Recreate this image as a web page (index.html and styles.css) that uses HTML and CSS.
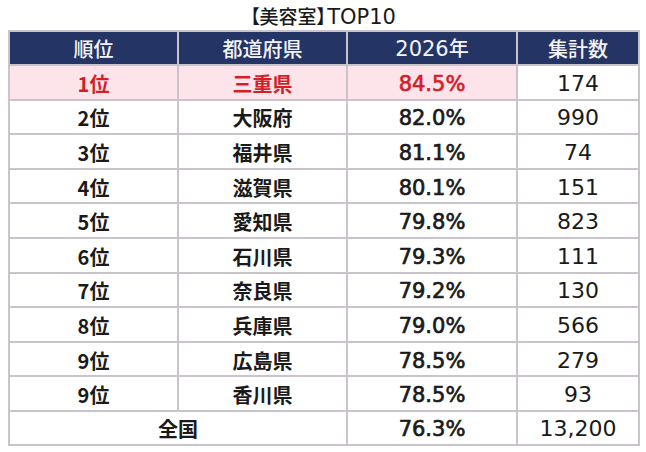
FILE: index.html
```html
<!DOCTYPE html>
<html lang="ja">
<head>
<meta charset="utf-8">
<link rel="stylesheet" href="styles.css">
</head>
<body>
<div class="title"><span class="br">【美容室】</span><span class="lat">TOP10</span></div>
<table class="rank">
  <colgroup>
    <col class="c1"><col class="c2"><col class="c3"><col class="c4">
  </colgroup>
  <thead>
    <tr><th>順位</th><th>都道府県</th><th><span class="num">2026</span>年</th><th>集計数</th></tr>
  </thead>
  <tbody>
    <tr class="top"><td class="jp hl">1位</td><td class="jp hl">三重県</td><td class="pct hl">84.5%</td><td class="cnt">174</td></tr>
    <tr><td class="jp">2位</td><td class="jp">大阪府</td><td class="pct">82.0%</td><td class="cnt">990</td></tr>
    <tr><td class="jp">3位</td><td class="jp">福井県</td><td class="pct">81.1%</td><td class="cnt">74</td></tr>
    <tr><td class="jp">4位</td><td class="jp">滋賀県</td><td class="pct">80.1%</td><td class="cnt">151</td></tr>
    <tr><td class="jp">5位</td><td class="jp">愛知県</td><td class="pct">79.8%</td><td class="cnt">823</td></tr>
    <tr><td class="jp">6位</td><td class="jp">石川県</td><td class="pct">79.3%</td><td class="cnt">111</td></tr>
    <tr><td class="jp">7位</td><td class="jp">奈良県</td><td class="pct">79.2%</td><td class="cnt">130</td></tr>
    <tr><td class="jp">8位</td><td class="jp">兵庫県</td><td class="pct">79.0%</td><td class="cnt">566</td></tr>
    <tr><td class="jp">9位</td><td class="jp">広島県</td><td class="pct">78.5%</td><td class="cnt">279</td></tr>
    <tr><td class="jp">9位</td><td class="jp">香川県</td><td class="pct">78.5%</td><td class="cnt">93</td></tr>
    <tr class="total"><td class="jp" colspan="2">全国</td><td class="pct">76.3%</td><td class="cnt">13,200</td></tr>
  </tbody>
</table>
</body>
</html>
```
FILE: styles.css
```css
html, body {
  margin: 0;
  padding: 0;
  background: #ffffff;
}
body {
  font-family: "Noto Sans CJK JP", sans-serif;
  color: #1a1a1a;
}
.title {
  width: 646px;
  height: 30px;
  line-height: 32px;
  text-align: center;
  color: #1a1a1a;
}
.br {
  font-family: "Noto Sans CJK JP", sans-serif;
  font-size: 19px;
  font-weight: 500;
  font-feature-settings: "palt";
}
.lat {
  font-family: "DejaVu Sans", sans-serif;
  font-size: 21px;
  font-weight: 400;
  margin-left: 1px;
}
.rank {
  margin-left: 8px;
  width: 632px;
  table-layout: fixed;
  border-collapse: separate;
  border-spacing: 0;
  border-left: 2px solid #c9c3cb;
  border-top: 2px solid #c9c3cb;
}
.c1 { width: 169px; }
.c2 { width: 169px; }
.c3 { width: 170px; }
.c4 { width: 122px; }
.rank th, .rank td {
  box-sizing: border-box;
  border-right: 2px solid #c9c3cb;
  border-bottom: 2px solid #c9c3cb;
  text-align: center;
  padding: 0;
  vertical-align: middle;
}
.rank th {
  height: 34px;
  background: #243565;
  color: #f4f4f6;
  font-size: 20px;
  font-weight: 500;
  line-height: 20px;
  padding-top: 1px;
}
.num {
  font-family: "DejaVu Sans", sans-serif;
  font-size: 21px;
  font-weight: 400;
}
.rank td {
  height: 34.6px;
  font-size: 20px;
  line-height: 20px;
  padding-top: 3px;
}
.jp {
  font-family: "Noto Sans CJK JP", sans-serif;
  font-weight: 700;
}
.pct {
  font-family: "DejaVu Sans", sans-serif;
  font-size: 21px !important;
  font-weight: 400;
  -webkit-text-stroke: 0.7px currentColor;
}
.cnt {
  font-family: "DejaVu Sans", sans-serif;
  font-size: 22px !important;
  font-weight: 400;
}
.rank td.hl {
  background: #fde4ea;
  color: #d41f2a;
}
.total td {
  height: 34px;
}
```
